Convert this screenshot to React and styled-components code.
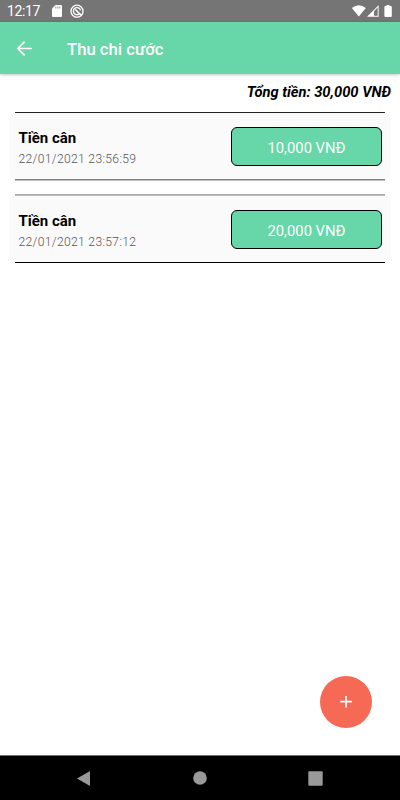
import React from 'react';
import styled, { createGlobalStyle } from 'styled-components';

const GlobalStyle = createGlobalStyle`
  * {
    box-sizing: border-box;
  }

  body {
    margin: 0;
    background: #fff;
    font-family: Roboto, sans-serif;
  }
`;

const Screen = styled.div`
  position: relative;
  display: flex;
  flex-direction: column;
  width: 400px;
  height: 800px;
  overflow: hidden;
  background: #fff;
`;

const StatusBar = styled.div`
  display: flex;
  flex: none;
  align-items: center;
  height: 22px;
  padding: 0 7px;
  background: #757575;
  color: #fff;
`;

const Clock = styled.span`
  width: 44px;
  font-size: 14px;
  line-height: 22px;
  letter-spacing: -0.4px;
`;

const StatusIcons = styled.svg`
  display: block;
  margin-left: ${props => (props.$right ? 'auto' : '0')};
`;

const Header = styled.header`
  display: flex;
  flex: none;
  align-items: center;
  height: 52px;
  padding: 1px 16px 0;
  background: #67d6a8;
  box-shadow: 0 1px 3px rgba(0, 0, 0, 0.22);
  color: #fff;
`;

const BackButton = styled.button`
  display: flex;
  width: 51px;
  padding: 0;
  background: none;
  border: none;
`;

const Title = styled.h1`
  margin: 0;
  padding-top: 2px;
  font-size: 16.7px;
  font-weight: 500;
  line-height: 22px;
`;

const Content = styled.main`
  flex: 1;
  padding: 8px 9px 0;
`;

const Total = styled.p`
  margin: 0 0 11px;
  padding-top: 1px;
  font-size: 14.7px;
  font-weight: 700;
  font-style: italic;
  line-height: 18px;
  text-align: right;
  color: #000;
`;

const Card = styled.section`
  display: flex;
  flex-direction: column;
  height: 69px;
  margin-bottom: 13px;
  background: linear-gradient(#fff 1px, transparent 1px, transparent 68px, #fff 68px), #fafafa;
  border-radius: 9px;
`;

const Line = styled.span`
  height: ${props => props.$size}px;
  margin: 0 6px;
  background: ${props => props.$color};
`;

const CardBody = styled.div`
  display: flex;
  flex: 1;
  align-items: center;
  justify-content: space-between;
  padding: 0 9px 0 9.5px;
`;

const Info = styled.div`
  padding-top: 4px;
`;

const Name = styled.div`
  font-size: 15px;
  font-weight: 700;
  line-height: 20px;
  color: #000;
`;

const DateText = styled.div`
  margin-top: 1px;
  font-size: 12.1px;
  font-weight: 300;
  line-height: 20px;
  letter-spacing: 0.33px;
  color: #555;
`;

const Amount = styled.div`
  width: 151px;
  height: 39px;
  padding-top: 1px;
  border: 1px solid #000;
  border-radius: 6px;
  background: #67d6a8;
  color: #fff;
  font-size: 14.8px;
  font-weight: 400;
  line-height: 38px;
  text-align: center;
`;

const AddButton = styled.button`
  position: absolute;
  right: 28px;
  bottom: 72px;
  display: flex;
  align-items: center;
  justify-content: center;
  width: 52px;
  height: 52px;
  padding: 0;
  border: none;
  border-radius: 50%;
  background: #f66a55;
`;

const NavBar = styled.nav`
  display: flex;
  flex: none;
  align-items: center;
  justify-content: space-between;
  height: 45px;
  padding: 0 77px;
  border-top: 1px solid #6f7370;
  background: #000;
`;

const items = [
  {
    id: 1,
    name: 'Tiền cân',
    date: '22/01/2021 23:56:59',
    amount: '10,000 VNĐ',
    top: { $size: 1, $color: '#222' },
    bottom: { $size: 2, $color: 'linear-gradient(#808080 1px, #c0c0c0 1px)' },
  },
  {
    id: 2,
    name: 'Tiền cân',
    date: '22/01/2021 23:57:12',
    amount: '20,000 VNĐ',
    top: { $size: 2, $color: 'linear-gradient(#aaa 1px, #bbb 1px)' },
    bottom: { $size: 1, $color: '#000' },
  },
];

const App = () => (
  <>
    <GlobalStyle />
    <Screen>
      <StatusBar>
        <Clock>12:17</Clock>
        <StatusIcons width="34" height="14" viewBox="0 0 34 14">
          <path d="M4.5 1H10Q11 1 11 2V12Q11 13 10 13H2Q1 13 1 12V4.5Z" fill="#fff" />
          <path d="M4.8 2.5V4.5M6.8 2.5V4.5M8.8 2.5V4.5" stroke="#888" strokeWidth="0.9" />
          <circle cx="26" cy="7.2" r="6" fill="none" stroke="#fff" strokeWidth="1.3" />
          <path d="M28.8 9.4A3.6 3.6 0 1 1 29.5 6.4" fill="none" stroke="#fff" strokeWidth="1.3" />
          <path d="M24.3 5.5L30 11.2" stroke="#fff" strokeWidth="1.7" />
        </StatusIcons>
        <StatusIcons $right width="42" height="14" viewBox="0 0 42 14">
          <path d="M0.8 4Q7.8 -1.4 14.8 4L7.8 12.5Z" fill="#fff" />
          <path d="M27.6 1.2V12.7H16Z" fill="#fff" />
          <path d="M26.7 3.5V11.8H23V7.2Z" fill="#757575" />
          <path d="M35.5 2V1H38.5V2H39.8Q40.8 2 40.8 3V12Q40.8 13 39.8 13H34.4Q33.4 13 33.4 12V3Q33.4 2 34.4 2Z" fill="#fff" />
        </StatusIcons>
      </StatusBar>
      <Header>
        <BackButton aria-label="Back">
          <svg width="17" height="16" viewBox="0 0 17 16" fill="none" stroke="#fff" strokeWidth="1.7">
            <path d="M16 7.5H2.3M8.6 0.7L1.8 7.5L8.6 14.3" />
          </svg>
        </BackButton>
        <Title>Thu chi cước</Title>
      </Header>
      <Content>
        <Total>Tổng tiền: 30,000 VNĐ</Total>
        {items.map(item => (
          <Card key={item.id}>
            <Line {...item.top} />
            <CardBody>
              <Info>
                <Name>{item.name}</Name>
                <DateText>{item.date}</DateText>
              </Info>
              <Amount>{item.amount}</Amount>
            </CardBody>
            <Line {...item.bottom} />
          </Card>
        ))}
      </Content>
      <AddButton aria-label="Add">
        <svg width="12" height="12" viewBox="0 0 12 12" stroke="#fff" strokeWidth="1.8">
          <path d="M6 0V11.6M0.3 5.7H11.9" />
        </svg>
      </AddButton>
      <NavBar>
        <svg width="13" height="15" viewBox="0 0 13 15">
          <path d="M13 0V15L0 7.5Z" fill="#999" />
        </svg>
        <svg width="16" height="14" viewBox="0 0 16 14">
          <circle cx="9" cy="7" r="6.8" fill="#999" />
        </svg>
        <svg width="15" height="15" viewBox="0 0 15 15">
          <rect x="0.3" y="0.3" width="14.4" height="14.4" rx="1" fill="#999" />
        </svg>
      </NavBar>
    </Screen>
  </>
);

export default App;
